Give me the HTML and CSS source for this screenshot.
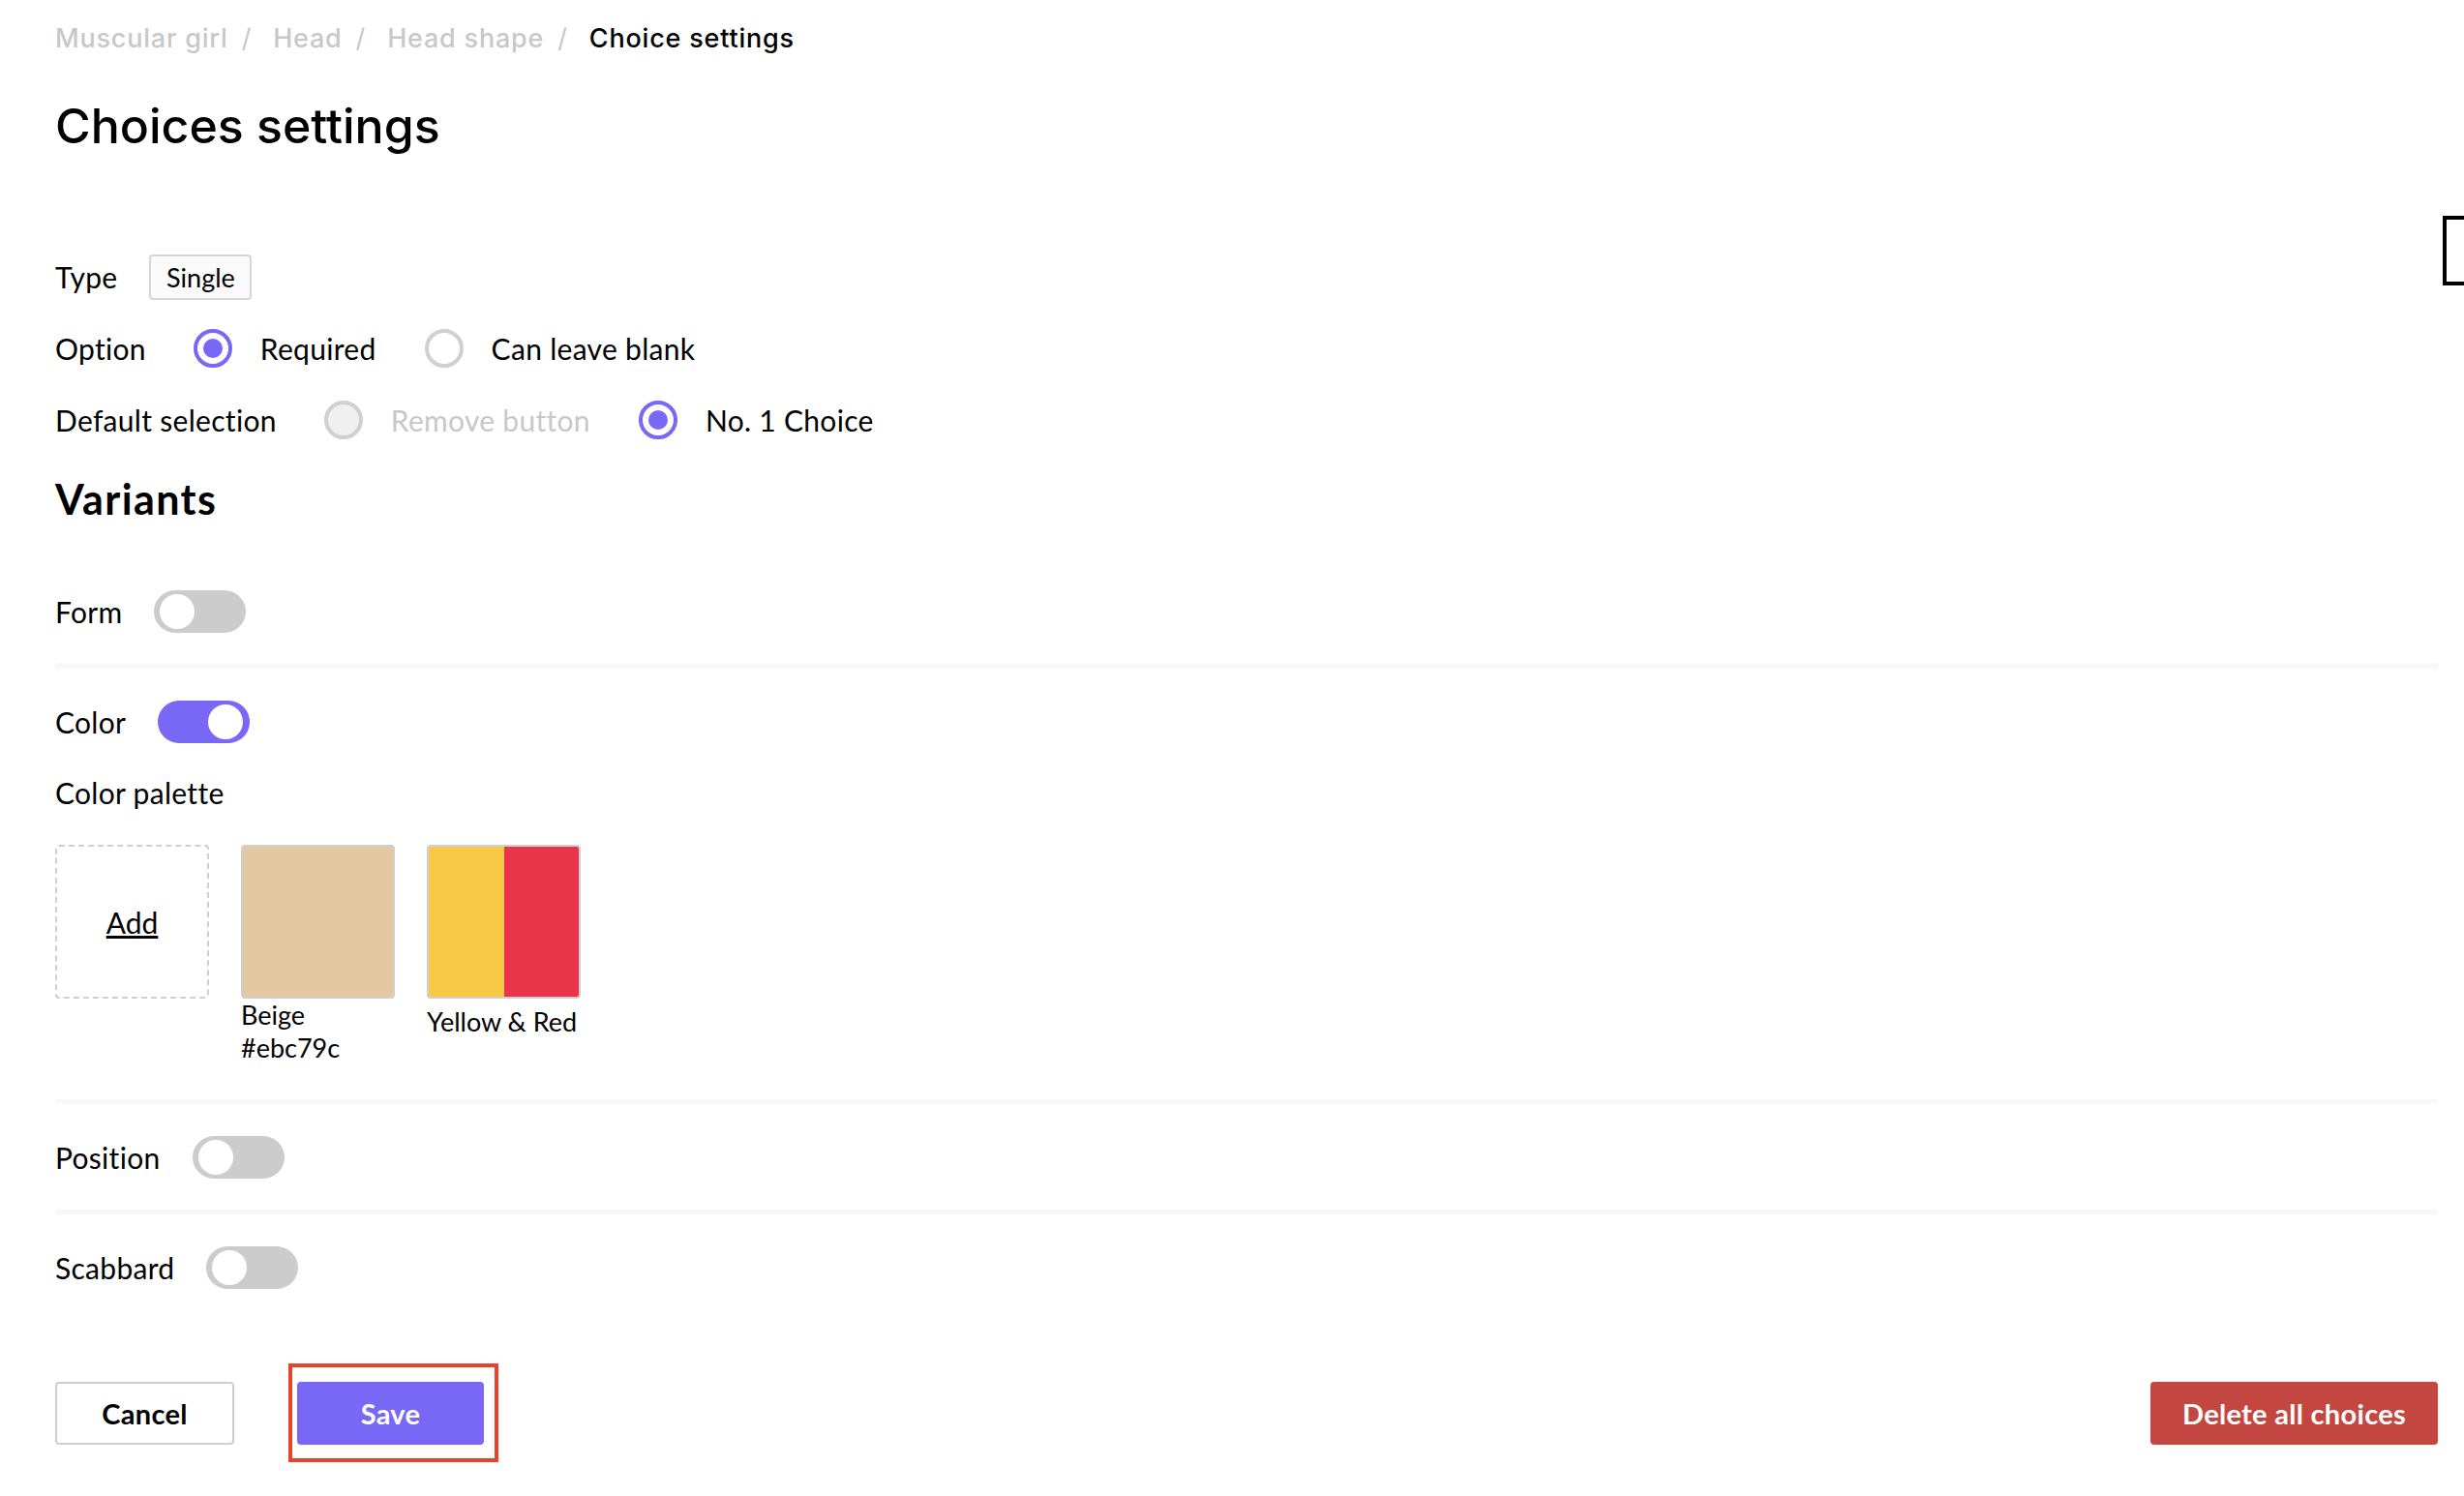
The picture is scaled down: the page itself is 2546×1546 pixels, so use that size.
FILE: index.html
```html
<!DOCTYPE html>
<html lang="en">
<head>
  <meta charset="UTF-8">
  <meta name="viewport" content="width=device-width, initial-scale=1.0">
  <title>Choices settings</title>
  <link rel="stylesheet" href="styles.css">
</head>
<body>
  <div class="page">
    <nav class="crumbs">
      <a href="#">Muscular girl</a><span class="sep">/</span>
      <a href="#">Head</a><span class="sep">/</span>
      <a href="#">Head shape</a><span class="sep">/</span>
      <span class="current">Choice settings</span>
    </nav>

    <h1 class="title">Choices settings</h1>

    <div class="settings">
      <div class="row">
        <span class="label">Type</span>
        <span class="badge">Single</span>
      </div>
      <div class="row">
        <span class="label">Option</span>
        <div class="options">
          <label class="opt"><span class="radio checked"></span>Required</label>
          <label class="opt"><span class="radio"></span>Can leave blank</label>
        </div>
      </div>
      <div class="row">
        <span class="label">Default selection</span>
        <div class="options">
          <label class="opt disabled"><span class="radio"></span>Remove button</label>
          <label class="opt"><span class="radio checked"></span>No. 1 Choice</label>
        </div>
      </div>
    </div>

    <h2 class="subtitle">Variants</h2>

    <section class="variant">
      <div class="switch-row">
        <span class="label">Form</span>
        <span class="toggle"></span>
      </div>
    </section>

    <section class="variant">
      <div class="switch-row">
        <span class="label">Color</span>
        <span class="toggle on"></span>
      </div>
      <div class="palette-title">Color palette</div>
      <div class="palette">
        <div class="swatch-item">
          <a href="#" class="swatch add">Add</a>
        </div>
        <div class="swatch-item">
          <div class="swatch beige"></div>
          <div class="swatch-name">Beige<br>#ebc79c</div>
        </div>
        <div class="swatch-item">
          <div class="swatch split"><span class="yellow"></span><span class="red"></span></div>
          <div class="swatch-name single">Yellow &amp; Red</div>
        </div>
      </div>
    </section>

    <section class="variant">
      <div class="switch-row">
        <span class="label">Position</span>
        <span class="toggle"></span>
      </div>
    </section>

    <section class="variant last">
      <div class="switch-row">
        <span class="label">Scabbard</span>
        <span class="toggle"></span>
      </div>
    </section>

    <div class="actions">
      <div class="left-actions">
        <button class="btn cancel">Cancel</button>
        <div class="save-wrap">
          <button class="btn save">Save</button>
          <span class="mark"></span>
        </div>
      </div>
      <button class="btn danger">Delete all choices</button>
    </div>
  </div>

  <div class="side-tab"></div>
</body>
</html>
```

FILE: styles.css
```css
html, body { margin: 0; padding: 0; }

body {
  background: #fff;
  color: #000;
  font-family: "Lato", "Noto Sans", sans-serif;
  overflow: hidden;
}

.page {
  padding: 0 27px 49px 57px;
}

/* breadcrumb */
.crumbs {
  margin-top: 20px;
  height: 40px;
  line-height: 40px;
  font-family: "Inter", sans-serif;
  font-size: 27px;
  font-weight: 500;
  letter-spacing: 0.8px;
  color: #c8c8c8;
}
.crumbs a {
  color: #c8c8c8;
  text-decoration: none;
}
.crumbs .sep {
  padding: 0 14px;
  font-weight: 400;
}
.crumbs .current {
  color: #000;
}

.title {
  margin: 40px 0 0;
  height: 60px;
  line-height: 60px;
  font-family: "Inter", sans-serif;
  font-size: 50px;
  font-weight: 500;
}

/* settings rows */
.settings {
  margin-top: 102px;
  display: flex;
  flex-direction: column;
  gap: 26px;
}
.row {
  display: flex;
  align-items: center;
  height: 48px;
  gap: 33px;
}
.label {
  font-size: 30px;
  letter-spacing: 0.3px;
}
.badge {
  display: inline-flex;
  align-items: center;
  justify-content: center;
  box-sizing: border-box;
  width: 106px;
  height: 47px;
  border: 2px solid #d6d6d6;
  border-radius: 4px;
  background: #fafafa;
  font-size: 27px;
}
.options {
  display: flex;
  align-items: center;
  gap: 50px;
  margin-left: 16px;
}
.opt {
  display: flex;
  align-items: center;
  gap: 29px;
  font-size: 30px;
  letter-spacing: 0.3px;
}
.opt.disabled {
  color: #c8c8c8;
}
.radio {
  position: relative;
  box-sizing: border-box;
  width: 40px;
  height: 40px;
  border: 4px solid #d0d0d0;
  border-radius: 50%;
  background: #fff;
}
.radio.checked {
  border-color: #7868f5;
}
.radio.checked::after {
  content: "";
  position: absolute;
  left: 6px;
  top: 6px;
  width: 20px;
  height: 20px;
  border-radius: 50%;
  background: #7868f5;
}
.opt.disabled .radio {
  background: #f0f0f0;
}

.subtitle {
  margin: 33px 0 36px;
  height: 50px;
  line-height: 50px;
  font-size: 43px;
  font-weight: 700;
  letter-spacing: 1.4px;
}

/* variants */
.variant {
  padding: 33px 0 32px;
  border-bottom: 5px solid #f8f8f8;
}
.variant.last {
  border-bottom: 0;
}
.switch-row {
  display: flex;
  align-items: center;
  gap: 33px;
  height: 44px;
}
.toggle {
  position: relative;
  width: 95px;
  height: 44px;
  border-radius: 22px;
  background: #cccccc;
}
.toggle::after {
  content: "";
  position: absolute;
  top: 4px;
  left: 6px;
  width: 36px;
  height: 36px;
  border-radius: 50%;
  background: #fff;
}
.toggle.on {
  background: #7868f5;
}
.toggle.on::after {
  left: auto;
  right: 7px;
}

.palette-title {
  margin-top: 31px;
  height: 40px;
  line-height: 40px;
  font-size: 30px;
  letter-spacing: 0.3px;
}
.palette {
  display: flex;
  align-items: flex-start;
  gap: 33px;
  margin-top: 34px;
  margin-bottom: 4px;
}
.swatch-item {
  width: 159px;
}
.swatch {
  box-sizing: border-box;
  width: 159px;
  height: 159px;
  border: 2px solid #cfcfcf;
  border-radius: 4px;
}
.swatch.add {
  display: flex;
  align-items: center;
  justify-content: center;
  border: 2px dashed #cfcfcf;
  color: #000;
  font-size: 30px;
}
.swatch.beige {
  background: #e4c8a2;
}
.swatch.split {
  display: flex;
  overflow: hidden;
}
.swatch.split span {
  flex: 1;
}
.yellow { background: #f7c945; }
.red { background: #e9344a; }
.swatch-name {
  line-height: 34px;
  font-size: 27px;
}
.swatch-name.single {
  margin-top: 7px;
}

/* bottom buttons */
.actions {
  margin-top: 64px;
  display: flex;
  justify-content: space-between;
  align-items: center;
}
.left-actions {
  display: flex;
  gap: 65px;
}
.save-wrap {
  position: relative;
}
.btn {
  display: block;
  box-sizing: border-box;
  height: 65px;
  border-radius: 4px;
  font-family: "Lato", sans-serif;
  font-size: 29px;
  font-weight: 700;
  letter-spacing: 0.3px;
  cursor: pointer;
}
.cancel {
  width: 185px;
  border: 2px solid #cfcfcf;
  background: #fff;
  color: #000;
}
.save {
  width: 193px;
  border: 0;
  background: #7868f5;
  color: #fff;
}
.mark {
  position: absolute;
  top: -19px;
  left: -9px;
  width: 217px;
  height: 102px;
  box-sizing: border-box;
  border: 4px solid #e8412c;
  pointer-events: none;
}
.danger {
  width: 297px;
  border: 0;
  background: #c44641;
  color: #fff;
}

/* clipped tab at right edge */
.side-tab {
  position: absolute;
  top: 223px;
  left: 2524px;
  width: 60px;
  height: 72px;
  box-sizing: border-box;
  border: 4px solid #000;
  background: #fff;
}
```
